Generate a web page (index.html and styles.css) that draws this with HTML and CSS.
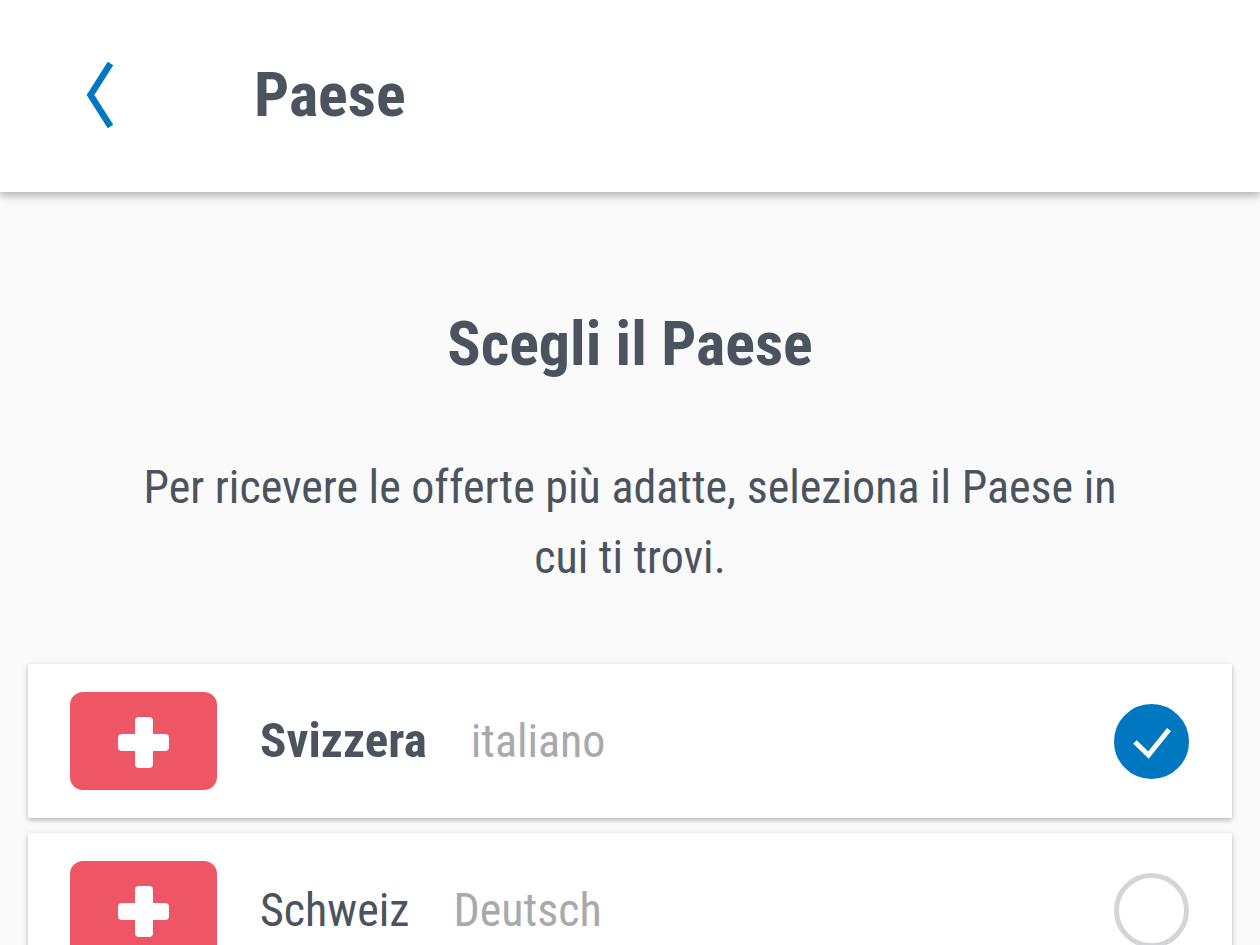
FILE: index.html
```html
<!DOCTYPE html>
<html lang="it">
<head>
<meta charset="utf-8">
<meta name="viewport" content="width=device-width, initial-scale=1">
<title>Paese</title>
<link rel="stylesheet" href="styles.css">
</head>
<body>
<header class="topbar">
  <button class="back" type="button" aria-label="Indietro">
    <svg class="back-icon" viewBox="0 0 28 66" aria-hidden="true"><path d="M24.500 1.500 4.500 33 24.500 64.500" fill="none" stroke="currentColor" stroke-width="6.500"/></svg>
  </button>
  <h1 class="title">Paese</h1>
</header>
<main class="content">
  <h2 class="heading">Scegli il Paese</h2>
  <p class="intro">Per ricevere le offerte più adatte, seleziona il Paese in cui ti trovi.</p>
  <div class="options" role="radiogroup" aria-label="Paese">
    <label class="card" for="ch-it">
      <svg class="flag" viewBox="0 0 147 98" aria-hidden="true"><rect width="147" height="98" rx="13" fill="#ee5565"/><rect x="65" y="25" width="18" height="51" rx="4" fill="#fff"/><rect x="48" y="42" width="51" height="17" rx="4" fill="#fff"/></svg>
      <span class="names"><span class="country">Svizzera</span><span class="language">italiano</span></span>
      <span class="choice">
        <input class="radio" type="radio" name="country" id="ch-it" checked>
        <svg class="check" viewBox="0 0 75 75" aria-hidden="true"><path d="M21 38 34.500 51 55 25.500" fill="none" stroke="#fff" stroke-width="5"/></svg>
      </span>
    </label>
    <label class="card" for="ch-de">
      <svg class="flag" viewBox="0 0 147 98" aria-hidden="true"><rect width="147" height="98" rx="13" fill="#ee5565"/><rect x="65" y="25" width="18" height="51" rx="4" fill="#fff"/><rect x="48" y="42" width="51" height="17" rx="4" fill="#fff"/></svg>
      <span class="names"><span class="country">Schweiz</span><span class="language">Deutsch</span></span>
      <span class="choice">
        <input class="radio" type="radio" name="country" id="ch-de">
        <svg class="check" viewBox="0 0 75 75" aria-hidden="true"><path d="M21 38 34.500 51 55 25.500" fill="none" stroke="#fff" stroke-width="5"/></svg>
      </span>
    </label>
  </div>
</main>
</body>
</html>
```
FILE: styles.css
```css
* { box-sizing: border-box; }

body {
  margin: 0;
  background: #fafafa;
  color: #4b545e;
  font-family: "Roboto Condensed", "Liberation Sans Narrow", "DejaVu Sans Condensed", sans-serif;
}

.topbar {
  display: flex;
  align-items: center;
  gap: 112px;
  height: 192px;
  padding: 0 58px 3px;
  background: #fff;
  box-shadow: 0 4px 8px rgba(0, 0, 0, .28);
}

.back {
  width: 84px;
  height: 84px;
  padding: 0;
  border: 0;
  background: none;
  color: #0077c1;
  cursor: pointer;
}

.back-icon { display: block; width: 28px; height: 66px; margin: 0 auto; }

.title, .heading {
  margin: 0;
  font-size: 62px;
  line-height: 80px;
  font-weight: 700;
}

.content { padding: 112px 28px 28px; }

.heading { text-align: center; }

.intro {
  margin: 68px 84px 0;
  font-size: 46px;
  line-height: 70px;
  text-align: center;
}

.options { display: grid; gap: 15px; margin-top: 72px; }

.card {
  display: flex;
  align-items: center;
  gap: 43px;
  padding: 28px 43px 28px 42px;
  background: #fff;
  box-shadow: 0 2px 5px rgba(0, 0, 0, .28);
  cursor: pointer;
}

.flag { flex: none; width: 147px; height: 98px; }

.names {
  display: flex;
  flex: 1;
  align-items: baseline;
  gap: 44px;
  font-size: 46px;
  line-height: 70px;
}

.language { color: #a7a9ac; }

.card:has(.radio:checked) .country { font-size: 49px; font-weight: 700; }

.choice { display: grid; flex: none; width: 75px; height: 75px; }

.radio, .check { grid-area: 1 / 1; width: 75px; height: 75px; margin: 0; }

.radio {
  appearance: none;
  border: 5px solid #d4d5d6;
  border-radius: 50%;
  background: #fff;
}

.radio:checked { border-color: #0077c1; background: #0077c1; }

.check { visibility: hidden; z-index: 1; pointer-events: none; }

.radio:checked + .check { visibility: visible; }
```
